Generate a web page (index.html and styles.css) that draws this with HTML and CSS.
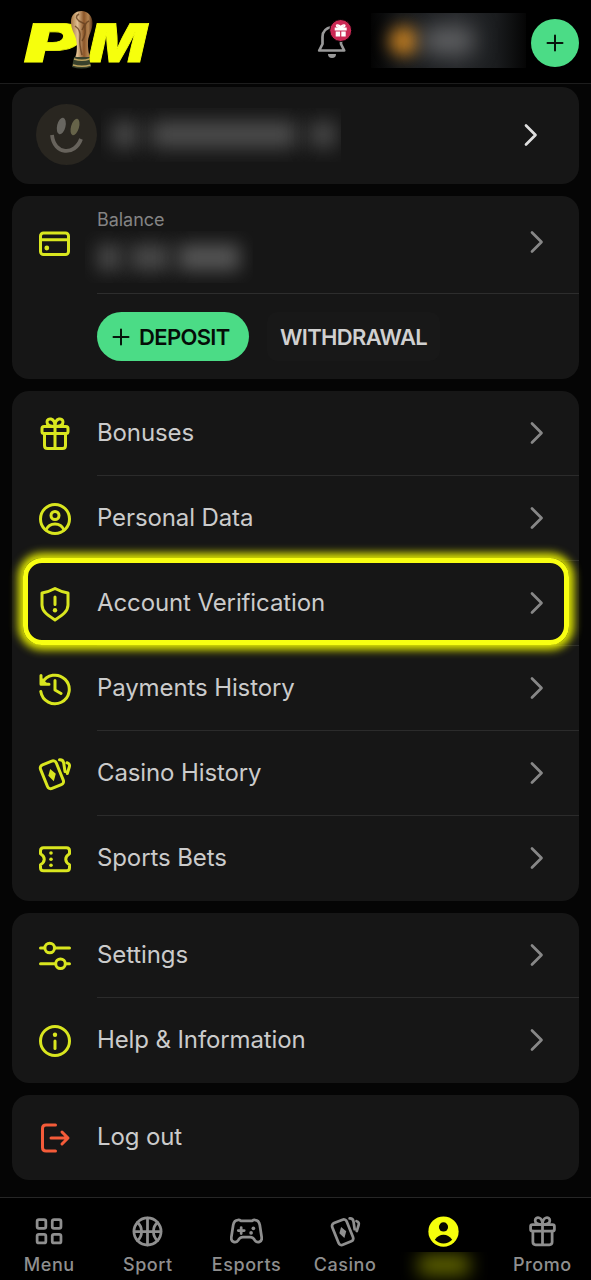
FILE: index.html
```html
<!DOCTYPE html>
<html lang="en">
<head>
<meta charset="utf-8">
<title>Account</title>
<link rel="stylesheet" href="styles.css">
</head>
<body>
<svg class="defs" width="0" height="0">
  <defs>
    <linearGradient id="gold" x1="0" x2="1"><stop offset="0" stop-color="#a87943"/><stop offset=".3" stop-color="#dfbd90"/><stop offset=".6" stop-color="#8b5528"/><stop offset=".8" stop-color="#b38350"/><stop offset="1" stop-color="#543015"/></linearGradient>
    <symbol id="chevron" viewBox="0 0 14 24"><path d="M2 2.500l9.500 9.500L2 21.500"/></symbol>
    <symbol id="gift" viewBox="0 0 36 36"><rect x="5" y="10.500" width="26" height="7" rx="2"/><path d="M7.500 17.500v12q0 3 3 3h15q3 0 3-3v-12M18 10.500v22M18 10.500c-4 0-8-1-8-4.500 0-4.500 8-5 8 4.500 0-9.500 8-9 8-4.500 0 3.500-4 4.500-8 4.500"/></symbol>
    <symbol id="user" viewBox="0 0 36 36"><circle cx="18" cy="18" r="14.500"/><circle cx="18" cy="14.500" r="4"/><path d="M9 29c3.500-8 14.500-8 18 0"/></symbol>
    <symbol id="shield" viewBox="0 0 36 36"><path d="M18 2.500q6.500 3.500 13 4.500v12c0 7-7 11-13 15-6-4-13-8-13-15V7q6.500-1 13-4.500zM18 11v7.500"/><circle class="dot" cx="18" cy="24.200" r="2.200"/></symbol>
    <symbol id="history" viewBox="0 0 36 36"><path d="M3.800 20.500A14.300 14.300 0 1 0 5.200 12M4 4.500v8.700h8M18 9.500V19l6 3.500"/><path class="dot" d="M4 6v7.200h7z"/></symbol>
    <symbol id="cards" viewBox="0 0 36 36"><rect x="6.500" y="6" width="17" height="25.500" rx="3.500" transform="rotate(-22 15 19)"/><path class="dot" d="M13.200 13l5.600 4.800-2 7.400-5.500-5.400z"/><path d="M22.500 3.800q3.500-.3 4.200 3.200l1.300 8.500M30 6.800q3.300 1 2.300 4.200l-2 6.500"/></symbol>
    <symbol id="ticket" viewBox="0 0 36 36"><path d="M6.500 6.700h23q3 0 3 3v3c-5 3-5 8 0 11v3q0 3-3 3h-23q-3 0-3-3v-3c5-3 5-8 0-11v-3q0-3 3-3z"/><g class="dot"><circle cx="14" cy="12" r="1.800"/><circle cx="14" cy="18.200" r="1.800"/><circle cx="14" cy="24.200" r="1.800"/></g></symbol>
    <symbol id="sliders" viewBox="0 0 36 36"><path d="M3.500 10h4M18 10h14.500M3.500 25.800H18M28.500 25.800h4"/><circle cx="12.700" cy="10" r="4.800"/><circle cx="23.500" cy="25.800" r="4.800"/></symbol>
    <symbol id="info" viewBox="0 0 36 36"><circle cx="18" cy="18" r="14.500"/><path d="M18 18v7.500"/><circle class="dot" cx="18" cy="11.800" r="2.200"/></symbol>
    <symbol id="logout" viewBox="0 0 36 36"><path d="M18.500 5H9Q5.500 5 5.500 8.500v19q0 3.500 3.500 3.500h9.500M14 18h16.500M25 12l6 6-6 6"/></symbol>
    <symbol id="wallet" viewBox="0 0 36 36"><rect x="3.500" y="8" width="28" height="21.500" rx="3"/><path d="M4 14.800h27"/><circle class="dot" cx="9.800" cy="23" r="2.400"/></symbol>
    <symbol id="grid" viewBox="0 0 36 36"><rect x="4.500" y="5" width="9.500" height="9.500" rx="2"/><rect x="21" y="5" width="9.500" height="9.500" rx="2"/><rect x="4.500" y="21" width="9.500" height="9.500" rx="2"/><rect x="21" y="21" width="9.500" height="9.500" rx="2"/></symbol>
    <symbol id="ball" viewBox="0 0 36 36"><circle cx="18" cy="18" r="14.800"/><path d="M18 3.500v29M3.500 18h29M7 8c6 5 6 15 0 20M29 8c-6 5-6 15 0 20"/></symbol>
    <symbol id="pad" viewBox="0 0 36 36"><path d="M8.500 5.500Q10 5 12 6.500h12q2-1.500 3.500-1 4 0 5 5.500l2 13c1 6-5 7-7.500 3.500-1.500-3-3-3.500-5-3.500h-8c-2 0-3.500.5-5 3.500-2.500 3.500-8.500 2.500-7.500-3.500l2-13q1-5.500 5-5.500zM9 17h6.500M12.200 13.700v6.600"/><g class="dot"><circle cx="25.500" cy="14.500" r="2"/><circle cx="23" cy="19.500" r="2"/></g></symbol>
  </defs>
</svg>

<div class="app">
  <header class="topbar">
    <svg class="logo" width="140" height="68" viewBox="0 0 140 68" role="img" aria-label="PM">
      <g class="logo-text">
        <text transform="translate(1.500 55.500) skewX(-13)" x="0" y="0" textLength="58" lengthAdjust="spacingAndGlyphs">P</text>
        <text transform="translate(66.500 55.500) skewX(-13)" x="0" y="0" textLength="57" lengthAdjust="spacingAndGlyphs">M</text>
      </g>
      <path fill="url(#gold)" d="M52 16C52 9 56 5 62.500 5s11 5 11 12c0 7-4 12-4.500 18-.5 7 1 13 2 17H56c2-5 2.500-12 1-19-1-5-5-9-5-17z"/>
      <path class="cup-shade" d="M60 8q-5 3 0 7l6 3-3 6M56 20q6 4 5 11t2 18M70 15q-5 2-4 8t-3 12"/>
      <path class="cup-base" d="M55 51h15l2 10q-9.500 3-19 0z"/>
      <path class="cup-line" d="M55 53q8 2.500 15.500 0M54 59q9 2.500 17.500 0"/>
    </svg>
    <div class="bell">
      <svg width="40" height="44" viewBox="0 0 40 44">
        <path class="bell-line" d="M19 12c-6 1-9.500 4-9.500 10v7L6.200 35.500h25L28 29v-8"/>
        <path class="bell-drop" d="M15 39h8a4 4 0 0 1-8 0z"/>
        <circle class="badge" cx="27.700" cy="15.500" r="11"/>
        <path class="badge-gift" d="M21.700 12.500h12v3h-12zM22.700 16.500h4.400v5h-4.400zM28.300 16.500h4.400v5h-4.400z"/>
        <path class="badge-bow" d="M27.700 12.500c-6 0-5-5 0-1 5-4 6 1 0 1"/>
      </svg>
    </div>
    <div class="amount"><i class="coin"></i><i class="sum"></i></div>
    <button class="add" aria-label="Add"><svg width="20" height="20" viewBox="0 0 20 20"><path d="M10 2.500v15M2.500 10h15"/></svg></button>
  </header>

  <main class="content">
    <section class="card profile">
      <svg class="avatar" width="61" height="61" viewBox="0 0 61 61"><circle cx="30.500" cy="30.500" r="30.500"/><ellipse cx="25.300" cy="22" rx="4.200" ry="8.500" transform="rotate(13 25.300 22)"/><ellipse class="right-eye" cx="39" cy="23" rx="4" ry="8.500" transform="rotate(16 39 23)"/><path d="M16 31c2 20 23 21 29 4"/></svg>
      <div class="hidden-name"><i></i><i></i><i></i></div>
      <svg class="chevron"><use href="#chevron"/></svg>
    </section>

    <section class="card wallet">
      <svg class="icon"><use href="#wallet"/></svg>
      <div class="wallet-body">
        <div class="balance">
          <div><p class="caption">Balance</p><div class="hidden-sum"><i></i><i></i><i></i></div></div>
          <svg class="chevron"><use href="#chevron"/></svg>
        </div>
        <div class="actions">
          <button class="deposit"><svg width="18" height="18" viewBox="0 0 18 18"><path d="M9 1.500v15M1.500 9h15"/></svg><span>DEPOSIT</span></button>
          <button class="withdraw"><span>WITHDRAWAL</span></button>
        </div>
      </div>
    </section>

    <nav class="card">
      <a class="row"><svg class="icon"><use href="#gift"/></svg><span class="label"><span>Bonuses</span><svg class="chevron"><use href="#chevron"/></svg></span></a>
      <a class="row"><svg class="icon"><use href="#user"/></svg><span class="label"><span>Personal Data</span><svg class="chevron"><use href="#chevron"/></svg></span></a>
      <a class="row highlighted"><svg class="icon"><use href="#shield"/></svg><span class="label"><span>Account Verification</span><svg class="chevron"><use href="#chevron"/></svg></span></a>
      <a class="row"><svg class="icon"><use href="#history"/></svg><span class="label"><span>Payments History</span><svg class="chevron"><use href="#chevron"/></svg></span></a>
      <a class="row"><svg class="icon"><use href="#cards"/></svg><span class="label"><span>Casino History</span><svg class="chevron"><use href="#chevron"/></svg></span></a>
      <a class="row"><svg class="icon"><use href="#ticket"/></svg><span class="label"><span>Sports Bets</span><svg class="chevron"><use href="#chevron"/></svg></span></a>
    </nav>

    <nav class="card">
      <a class="row"><svg class="icon"><use href="#sliders"/></svg><span class="label"><span>Settings</span><svg class="chevron"><use href="#chevron"/></svg></span></a>
      <a class="row"><svg class="icon"><use href="#info"/></svg><span class="label"><span>Help &amp; Information</span><svg class="chevron"><use href="#chevron"/></svg></span></a>
    </nav>

    <nav class="card">
      <a class="row"><svg class="icon danger"><use href="#logout"/></svg><span class="label"><span>Log out</span></span></a>
    </nav>
  </main>

  <nav class="tabs">
    <a class="tab"><svg><use href="#grid"/></svg><span>Menu</span></a>
    <a class="tab"><svg><use href="#ball"/></svg><span>Sport</span></a>
    <a class="tab"><svg><use href="#pad"/></svg><span>Esports</span></a>
    <a class="tab"><svg><use href="#cards"/></svg><span>Casino</span></a>
    <a class="tab active"><svg viewBox="0 0 36 36"><circle class="disc" cx="18" cy="18" r="16.500"/><circle class="face" cx="18" cy="13" r="5"/><path class="face" d="M8.500 27q4-5.500 9.500-5.500t9.500 5.500q-4 4-9.500 4t-9.500-4z"/></svg><div class="hidden-tab"><i></i></div></a>
    <a class="tab"><svg><use href="#gift"/></svg><span>Promo</span></a>
  </nav>
</div>
</body>
</html>
```

FILE: styles.css
```css
* { box-sizing: border-box; }
body { margin: 0; background: #050505; color: #cbcbcb; font-family: Inter, "Liberation Sans", sans-serif; }
.defs { position: absolute; }
button { border: 0; padding: 0; font: inherit; }
p { margin: 0; }
svg { flex: none; }

.app { display: flex; flex-direction: column; width: 591px; height: 1280px; overflow: hidden; }

.topbar { display: flex; align-items: center; height: 84px; padding: 0 12px 0 19px; background: #000; border-bottom: 1px solid #1d1d1d; }
.logo { margin-top: -3px; }
.logo-text { fill: #f6ff0c; stroke: #f6ff0c; stroke-width: .8; font-size: 53px; font-weight: 900; }
.cup-shade { fill: none; stroke: #65401f; stroke-width: 1.5; opacity: .8; }
.cup-base { fill: #38412c; }
.cup-line { fill: none; stroke: #bda35f; stroke-width: 1.4; }
.bell { width: 40px; height: 44px; margin-top: -10px; margin-left: 154px; }
.bell-line { fill: none; stroke: #999; stroke-width: 2.7; stroke-linejoin: round; }
.bell-drop { fill: #999; }
.badge { fill: #ca2854; stroke: #000; stroke-width: 1; }
.badge-gift { fill: #fff; }
.badge-bow { fill: none; stroke: #fff; stroke-width: 1.6; }
.amount { display: flex; align-items: center; width: 155px; height: 55px; margin-top: -2px; margin-left: 18px; padding-left: 18px; gap: 4px; overflow: hidden; background: linear-gradient(90deg, #030303, #17191b 20%, #25272a 55%, #1b1d1f 80%, #050505); }
.coin { width: 30px; height: 30px; border-radius: 50%; background: #b87821; filter: blur(8px); }
.sum { width: 50px; height: 25px; background: #646567; filter: blur(11px); }
.add { display: flex; align-items: center; justify-content: center; width: 48px; height: 48px; margin-top: 2px; margin-left: 5px; border-radius: 50%; background: #4bdc86; }
.add path, .deposit path { fill: none; stroke: #07150c; stroke-width: 2; stroke-linecap: round; }

.content { display: flex; flex-direction: column; flex: 1; gap: 12px; padding: 3px 12px 0; }
.card { flex: none; border-radius: 17px; background: #161616; }
.profile { display: flex; align-items: center; height: 97px; padding: 0 41px 2px 24px; }
.avatar { fill: #292620; }
.avatar ellipse { fill: #686660; }
.avatar .right-eye { fill: #666349; }
.avatar path { fill: none; stroke: #67635c; stroke-width: 3.8; }
.hidden-name { display: flex; align-items: center; gap: 14px; width: 240px; height: 54px; margin-left: 4px; padding-left: 12px; overflow: hidden; }
.hidden-name i { height: 25px; background: #515151; filter: blur(10px); }
.hidden-name i:nth-child(1) { width: 24px; }
.hidden-name i:nth-child(2) { width: 146px; }
.hidden-name i:nth-child(3) { width: 24px; }
.chevron { width: 14px; height: 24px; margin-left: auto; fill: none; stroke: #878787; stroke-width: 2.7; stroke-linecap: round; stroke-linejoin: round; }
.profile .chevron { stroke: #dedede; }

.icon { width: 36px; height: 36px; fill: none; stroke: #d9e61f; stroke-width: 3; stroke-linecap: round; stroke-linejoin: round; color: #d9e61f; }
.icon.danger { stroke: #f45b39; }
.dot { fill: currentColor; stroke: none; }
.wallet { display: flex; gap: 24px; height: 183px; padding-left: 25px; }
.wallet .icon { margin-top: 29px; }
.wallet-body { flex: 1; }
.balance { display: flex; height: 98px; padding: 13px 35px 0 0; border-bottom: 1px solid #2d2d2d; }
.balance .chevron { margin-top: 21px; }
.caption { height: 22px; color: #848484; font-size: 18px; line-height: 22px; letter-spacing: -.05px; }
.hidden-sum { display: flex; align-items: center; gap: 8px; width: 168px; height: 52px; margin-left: -12px; padding-left: 12px; overflow: hidden; }
.hidden-sum i { height: 27px; background: #484848; filter: blur(9px); }
.hidden-sum i:nth-child(1) { width: 25px; }
.hidden-sum i:nth-child(2) { width: 40px; }
.hidden-sum i:nth-child(3) { width: 62px; background: #555; }
.actions { display: flex; gap: 18px; padding-top: 18px; }
.actions button { display: flex; align-items: center; justify-content: center; height: 49px; border-radius: 25px; font-size: 22px; font-weight: 600; letter-spacing: -.65px; }
.actions button.deposit { justify-content: flex-start; padding-left: 15px; }
.deposit { gap: 9px; width: 152px; background: #4bdc86; color: #050d08; }
.withdraw { width: 173px; background: #181818; color: #d0d0d0; }
.actions .withdraw { border-radius: 10px; }

.row { display: flex; align-items: center; gap: 24px; height: 85px; padding-left: 25px; position: relative; }
.label { display: flex; flex: 1; align-items: center; align-self: stretch; padding-right: 35px; border-bottom: 1px solid #2b2b2b; font-size: 24px; letter-spacing: -.11px; }
.label span { margin-top: -2px; }
.row:last-child .label { border-bottom-color: transparent; }
.highlighted { z-index: 1; }
.highlighted::after { content: ""; position: absolute; inset: -3px 10px 1px 11px; border: 5px solid #f8ff12; border-radius: 19px; box-shadow: 0 0 9px 5px #dfe600; }

.tabs { display: grid; grid-template-columns: repeat(6, 98.600px); flex: none; height: 83px; background: #000; border-top: 1px solid #262626; }
.tab { display: flex; flex-direction: column; align-items: center; padding-top: 17px; color: #8f8f8f; font-size: 18px; font-weight: 500; letter-spacing: .55px; line-height: 22px; }
.tab svg { width: 33px; height: 33px; margin-bottom: 6px; fill: none; stroke: currentColor; stroke-width: 3; stroke-linecap: round; stroke-linejoin: round; }
.tab .disc { fill: #f6ff0c; stroke: none; }
.tab .face { fill: #080800; stroke: none; }
.hidden-tab { display: flex; justify-content: center; width: 88px; height: 30px; padding-top: 3px; margin-top: -2px; overflow: hidden; }
.hidden-tab i { width: 50px; height: 20px; background: #626600; filter: blur(9px); }
```
